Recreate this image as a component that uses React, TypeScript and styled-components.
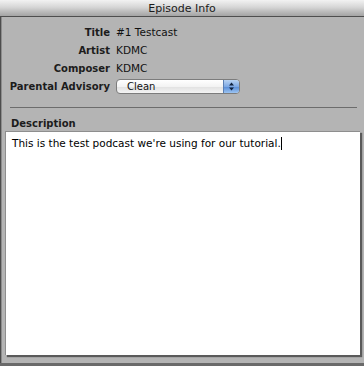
import React from "react";
import styled, { createGlobalStyle } from "styled-components";

const Global = createGlobalStyle`
  html, body { margin: 0; padding: 0; background: #b4b4b4; }
  body { font-family: "DejaVu Sans", "Noto Sans", sans-serif; }
`;

const Panel = styled.div`
  width: 364px;
  height: 366px;
  box-sizing: border-box;
  display: flex;
  flex-direction: column;
  background: #b4b4b4;
  border-bottom: 3px solid #6a6a6a;
  overflow: hidden;
`;

const Header = styled.div`
  height: 16px;
  flex: none;
  display: flex;
  align-items: center;
  justify-content: center;
  background: linear-gradient(#f2f2f2, #d6d6d6 45%, #b9b9b9 75%, #a4a4a4);
  border-bottom: 1px solid #4e4e4e;
  font-size: 11px;
  color: #1a1a1a;
`;

const Body = styled.div`
  flex: 1;
  display: flex;
  flex-direction: column;
  border-left: 1px solid #4c4c4c;
  box-shadow: inset 1px 0 0 #8c8c8c;
`;

const Form = styled.div`
  display: grid;
  grid-template-columns: 109px 1fr;
  column-gap: 6px;
  grid-auto-rows: 18px;
  align-items: center;
  padding-top: 6px;
`;

const Label = styled.div`
  text-align: right;
  font-weight: bold;
  font-size: 10px;
  color: #1c1c1c;
  white-space: nowrap;
`;

const Value = styled.div`
  font-size: 10.5px;
  color: #111;
`;

const Select = styled.div`
  width: 124px;
  height: 15px;
  box-sizing: border-box;
  display: flex;
  border: 1px solid #7c7c7c;
  border-radius: 4px;
  background: linear-gradient(#ffffff, #f3f3f3 50%, #e2e2e2 55%, #f4f4f4);
  overflow: hidden;
`;

const SelectText = styled.div`
  flex: 1;
  padding-left: 10px;
  font-size: 10px;
  line-height: 13px;
  color: #111;
`;

const Stepper = styled.div`
  width: 15px;
  display: flex;
  align-items: center;
  justify-content: center;
  border-left: 1px solid #5b7fb3;
  background: linear-gradient(#b9d3f2, #7ea9e4 50%, #5b8fd8 55%, #9cc4f2);
`;

const Separator = styled.div`
  margin: 12px 7px 0 9px;
  height: 1px;
  background: #6c6c6c;
`;

const SectionLabel = styled.div`
  margin: 10px 0 0 10px;
  font-weight: bold;
  font-size: 10px;
  line-height: 12px;
  color: #1c1c1c;
`;

const TextArea = styled.div`
  margin: 1px 4px 0 4px;
  height: 224px;
  flex: none;
  box-sizing: border-box;
  background: #fff;
  border-top: 1px solid #8e8e8e;
  border-left: 1px solid #8e8e8e;
  box-shadow: 2px 2px 1px rgba(0, 0, 0, 0.5);
  padding: 4px 6px;
  font-size: 10.5px;
  line-height: 14px;
  color: #000;
`;

const Caret = styled.span`
  display: inline-block;
  width: 1px;
  height: 13px;
  background: #000;
  vertical-align: -3px;
`;

function Arrows() {
  return (
    <svg width="7" height="11" viewBox="0 0 7 11">
      <path d="M3.5 1.5 L6 4.5 H1 Z" fill="#10213d" />
      <path d="M3.5 9.5 L6 6.5 H1 Z" fill="#10213d" />
    </svg>
  );
}

export default function App() {
  return (
    <>
      <Global />
      <Panel>
        <Header>Episode Info</Header>
        <Body>
          <Form>
            <Label>Title</Label>
            <Value>#1 Testcast</Value>
            <Label>Artist</Label>
            <Value>KDMC</Value>
            <Label>Composer</Label>
            <Value>KDMC</Value>
            <Label>Parental Advisory</Label>
            <Select>
              <SelectText>Clean</SelectText>
              <Stepper>
                <Arrows />
              </Stepper>
            </Select>
          </Form>
          <Separator />
          <SectionLabel>Description</SectionLabel>
          <TextArea>
            This is the test podcast we're using for our tutorial.
            <Caret />
          </TextArea>
        </Body>
      </Panel>
    </>
  );
}
